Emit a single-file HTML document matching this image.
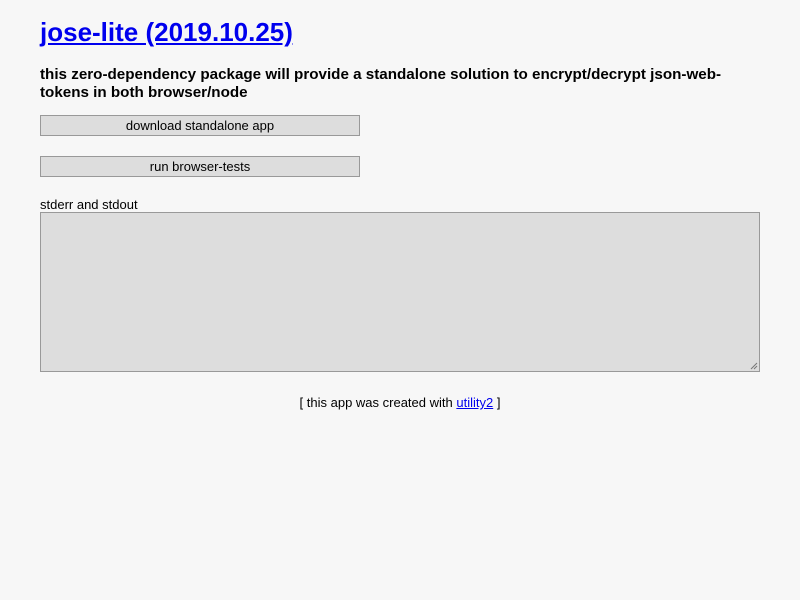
<!DOCTYPE html>
<html><head><meta charset="utf-8"><style>
body{margin:0;background:#f7f7f7;font-family:"Liberation Sans",Arial,sans-serif;width:800px;height:600px;overflow:hidden;position:relative}
.a{position:absolute}
h1{position:absolute;left:40px;top:14px;margin:0;font-size:26px;font-weight:bold;line-height:36px}
h1 a{color:#0000ee}
.sub{left:40px;top:66px;width:720px;font-size:15.2px;font-weight:bold;line-height:18px;color:#000}
.btn{left:40px;width:318px;height:19px;border:1px solid #999;background:#ddd;font-size:13px;line-height:19px;text-align:center;color:#000}
.lbl{left:40px;top:197px;font-size:13px;line-height:16px}
.ta{left:40px;top:212px;width:718px;height:158px;border:1px solid #999;background:#ddd}
.ft{left:0;width:800px;top:395px;text-align:center;font-size:13px;line-height:16px}
.ft a{color:#0000ee}
</style></head><body>
<h1><a href="#">jose-lite (2019.10.25)</a></h1>
<div class="a sub">this zero-dependency package will provide a standalone solution to encrypt/decrypt json-web-tokens in both browser/node</div>
<div class="a btn" style="top:115px">download standalone app</div>
<div class="a btn" style="top:156px">run browser-tests</div>
<div class="a lbl">stderr and stdout</div>
<div class="a ta"><svg class="a" style="right:1px;bottom:1px" width="8" height="8"><path d="M1 7L7 1M4 7L7 4" stroke="#777" stroke-width="1"/></svg></div>
<div class="a ft">[ this app was created with <a href="#">utility2</a> ]</div>
</body></html>
